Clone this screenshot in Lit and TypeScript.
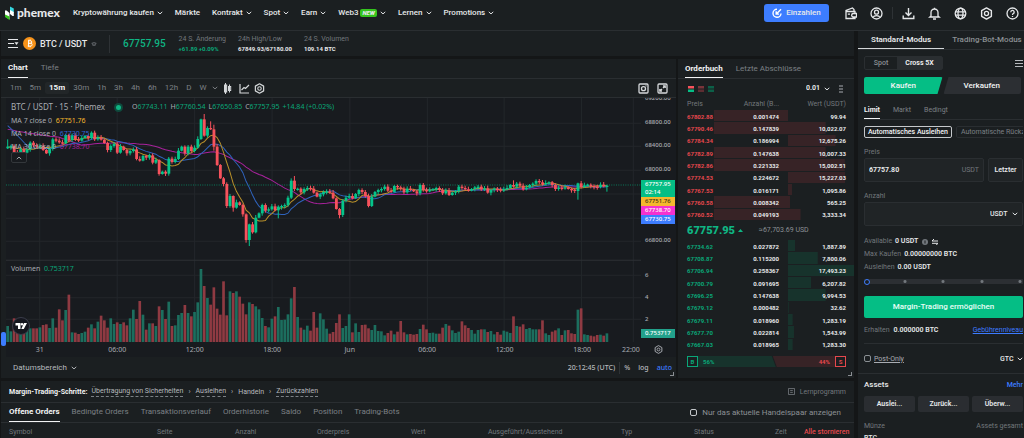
import { LitElement, html, css, svg } from "lit";
import { customElement, state } from "lit/decorators.js";
import { classMap } from "lit/directives/class-map.js";

/* Closing level and volume of each 15 minute bar; the last field is 1 for a rising bar. */
const BARS: number[][] = [
  [170, 48, 1], [168, 32, 1], [186, 71, 0], [188, 50, 0], [178, 55, 1], [188, 50, 0], [178, 45, 1], [158, 41, 1], [166, 41, 0], [170, 41, 0],
  [168, 44, 1], [180, 51, 0], [190, 53, 0], [176, 42, 1], [148, 71, 1], [152, 43, 0], [157, 98, 0], [160, 65, 0], [135, 96, 1], [150, 142, 0],
  [136, 29, 1], [148, 28, 0], [152, 24, 0], [144, 27, 1], [138, 31, 1], [144, 43, 0], [128, 53, 1], [148, 41, 0], [143, 61, 1], [149, 79, 0],
  [159, 65, 0], [180, 43, 0], [168, 71, 1], [162, 54, 1], [188, 59, 0], [170, 54, 1], [180, 59, 0], [190, 50, 0], [183, 71, 1], [178, 97, 1],
  [207, 69, 0], [212, 123, 0], [198, 82, 1], [203, 37, 0], [196, 56, 1], [218, 56, 0], [210, 48, 1], [252, 107, 0], [245, 96, 1], [251, 69, 0],
  [206, 121, 1], [216, 48, 0], [207, 50, 1], [182, 81, 1], [170, 87, 1], [190, 111, 0], [170, 87, 1], [183, 77, 0], [173, 90, 1], [147, 119, 1],
  [88, 219, 1], [137, 168, 0], [114, 132, 1], [118, 112, 0], [170, 164, 0], [225, 100, 0], [265, 82, 0], [282, 182, 0], [348, 80, 0], [318, 152, 1],
  [353, 147, 0], [337, 152, 1], [345, 136, 0], [373, 115, 0], [450, 83, 0], [403, 119, 1], [427, 114, 0], [383, 107, 1], [370, 98, 1], [345, 72, 1],
  [362, 48, 0], [358, 44, 1], [349, 70, 1], [361, 77, 0], [350, 105, 1], [348, 66, 1], [345, 67, 1], [323, 83, 1], [272, 131, 1], [297, 165, 0],
  [296, 75, 1], [307, 43, 0], [297, 37, 1], [294, 49, 1], [296, 34, 0], [308, 90, 0], [320, 43, 0], [313, 86, 1], [306, 68, 1], [304, 40, 1],
  [308, 25, 0], [325, 30, 0], [357, 57, 0], [375, 83, 0], [332, 42, 1], [323, 48, 1], [318, 83, 1], [325, 29, 0], [312, 56, 1], [300, 30, 1],
  [306, 51, 0], [318, 52, 0], [348, 41, 0], [320, 36, 1], [306, 51, 1], [300, 33, 1], [297, 32, 1], [290, 20, 1], [302, 27, 0], [306, 34, 0],
  [288, 23, 1], [292, 31, 0], [296, 63, 0], [307, 29, 0], [296, 23, 1], [300, 24, 0], [304, 22, 0], [310, 24, 0], [285, 39, 1], [300, 52, 0],
  [303, 38, 0], [300, 27, 1], [297, 28, 1], [294, 25, 1], [300, 25, 0], [310, 43, 0], [302, 54, 1], [315, 49, 0], [308, 35, 1], [304, 27, 1],
  [290, 31, 1], [294, 62, 0], [298, 50, 0], [302, 42, 0], [297, 36, 1], [292, 25, 1], [290, 36, 1], [298, 38, 0], [295, 38, 1], [308, 30, 0],
  [300, 33, 1], [296, 23, 1], [298, 30, 0], [302, 22, 0], [297, 34, 1], [294, 31, 1], [285, 27, 1], [290, 77, 0], [281, 48, 1], [287, 46, 0],
  [298, 53, 0], [293, 39, 1], [285, 42, 1], [281, 38, 1], [273, 38, 1], [277, 38, 0], [283, 65, 0], [279, 26, 1], [277, 21, 1], [285, 31, 0],
  [297, 35, 0], [293, 41, 1], [296, 21, 0], [292, 35, 1], [297, 36, 0], [299, 26, 0], [303, 24, 0], [280, 97, 1], [291, 101, 0], [286, 23, 1],
  [284, 21, 1], [288, 19, 0], [290, 17, 0], [291, 21, 0], [284, 22, 1], [289, 19, 0], [287, 26, 1],
];
/* Levels before the first visible bar, for the moving averages. */
const HISTORY = [...Array(16).fill(128), ...Array(7).fill(42), ...Array(6).fill(172)];
const LONG_WICKS: Record<number, [number, number]> = {
  0: [22, 2], 26: [4, 4], 47: [2, 5], 61: [16, 3], 63: [20, 2], 64: [14, 12], 60: [2, 3], 70: [2, 12], 74: [3, 8],
  75: [2, 18], 84: [4, 24], 89: [14, 6], 103: [3, 10], 177: [2, 26], 150: [2, 8], 157: [14, 3], 186: [3, 14],
};
const STEP = 9.65;
const X0 = 5;

const chevron = html`<svg class="chev" viewBox="0 0 8 5"><path d="M1 1l3 2.7L7 1" fill="none" stroke="currentColor" stroke-width="1.3"/></svg>`;
const gear = html`<svg class="ic" viewBox="0 0 12 12"><path d="M6 .8l4.500 2.600v5.200L6 11.200 1.500 8.600V3.400z" fill="none" stroke="currentColor" stroke-width="1.3" stroke-linejoin="round"/><circle cx="6" cy="6" r="1.900" fill="none" stroke="currentColor" stroke-width="1.2"/></svg>`;

@customElement("price-chart")
class PriceChart extends LitElement {
  static styles = css`
    :host { display: block; min-width: 0; min-height: 0; }
    svg { display: block; width: 100%; height: 100%; }
    .grid { stroke: #23272b; stroke-width: 3; }
    .pane { stroke: #2c3034; stroke-width: 3; }
    .last { stroke: #0b7a5b; stroke-width: 3; stroke-dasharray: 3 4; }
    .up { fill: #05c48a; } .down { fill: #f6525c; }
    .vup { fill: #1c6e5e; } .vdown { fill: #8f3a42; }
    .ma { fill: none; stroke-width: 3; }
    .m7 { stroke: #b8902a; } .m14 { stroke: #2f63bd; } .m30 { stroke: #a8229c; }
  `;

  private average(span: number) {
    const all = [...HISTORY, ...BARS.map((b) => b[0])];
    return BARS.map((_, i) => {
      const end = i + HISTORY.length + 1;
      const mean = all.slice(end - span, end).reduce((a, b) => a + b, 0) / span;
      return `${i * STEP + X0},${mean - 24}`;
    }).join(" ");
  }

  render() {
    return html`<svg viewBox="0 0 1902 732" preserveAspectRatio="none" role="img" aria-label="BTC / USDT">
      ${[76, 145, 217, 288, 361, 430, 532, 599, 664].map((y) => svg`<line class="grid" x1="0" x2="1902" y1=${y} y2=${y} />`)}
      ${[101, 333, 565, 797, 1030, 1262, 1492, 1724, 1879].map((x) => svg`<line class="grid" y1="0" y2="732" x1=${x} x2=${x} />`)}
      <line class="pane" x1="0" x2="1902" y1="487" y2="487" />
      ${BARS.map(([, v, up], i) => svg`<rect class=${up ? "vup" : "vdown"} x=${X0 + i * STEP - 4} width="8" y=${732 - v} height=${v} />`)}
      <line class="last" x1="0" x2="1902" y1="261" y2="261" />
      <polyline class="ma m30" points=${this.average(30)} />
      <polyline class="ma m14" points=${this.average(14)} />
      <polyline class="ma m7" points=${this.average(7)} />
      ${BARS.map(([c, , up], i) => {
        const o = i ? BARS[i - 1][0] : 175;
        const top = Math.min(o, c) - 24;
        const h = Math.max(4, Math.abs(o - c));
        const [a, b] = LONG_WICKS[i] ?? [3 + ((i * 7) % 6), 2 + ((i * 5) % 6)];
        const x = X0 + i * STEP;
        return svg`<g class=${up ? "up" : "down"}><rect x=${x - 1.5} width="3" y=${top - a} height=${h + a + b} /><rect x=${x - 4} width="8.5" y=${top} height=${h} /></g>`;
      })}
    </svg>`;
  }
}

const ASKS: [string, string, string, number, number][] = [
  ["67802.88", "0.001474", "99.94", 1, 0], ["67790.46", "0.147839", "10,022.07", 1, 57], ["67784.34", "0.186994", "12,675.26", 0, 72],
  ["67782.89", "0.147638", "10,007.33", 1, 57], ["67782.86", "0.221332", "15,002.51", 1, 86], ["67774.53", "0.224672", "15,227.03", 0, 87],
  ["67767.53", "0.016171", "1,095.86", 0, 6], ["67760.58", "0.008342", "565.25", 1, 3], ["67760.52", "0.049193", "3,333.34", 1, 19],
];
const BIDS: [string, string, string, number, number][] = [
  ["67734.62", "0.027872", "1,887.89", 0, 11], ["67708.87", "0.115200", "7,800.06", 0, 45], ["67706.94", "0.258367", "17,493.23", 0, 100],
  ["67700.79", "0.091695", "6,207.82", 0, 35], ["67696.25", "0.147638", "9,994.53", 0, 57], ["67679.12", "0.000482", "32.62", 0, 1],
  ["67679.11", "0.018960", "1,283.19", 0, 7], ["67677.70", "0.022814", "1,543.99", 0, 9], ["67667.03", "0.018965", "1,283.30", 0, 7],
];

@customElement("app-root")
class AppRoot extends LitElement {
  @state() private interval = "15m";

  static styles = css`
    :host {
      display: flex; flex-direction: column; height: 100vh; overflow: hidden;
      background: #141617; color: #e6e8ea;
      font: 500 8px/12px Roboto, "Liberation Sans", sans-serif;
    }
    * { box-sizing: border-box; }
    button, input, select { font: inherit; color: inherit; background: none; border: 0; padding: 0; margin: 0; border-radius: 0; outline: 0; }
    a { color: inherit; text-decoration: none; }
    svg { display: block; flex: none; }
    button, label, a { white-space: nowrap; }
    select { appearance: none; }
    .chev { width: 6px; height: 4px; }
    .ic { width: 11px; height: 11px; }
    .row { display: flex; align-items: center; }
    .panel { background: #1b1f21; }
    .muted { color: #72777c; }
    .green { color: #0aa678; } .red { color: #e5484d; } .blue { color: #3d7bff; }
    .push { margin-left: auto; }

    .top { height: 31px; flex: none; border-bottom: 1px solid #2a2e31; padding: 0 5px 4px 5px; }
    .brand { gap: 2px; width: 68px; font: 900 12px/14px Lato, sans-serif; }
    .brand svg { width: 10px; height: 14px; }
    .nav { gap: 12px; }
    .nav a { display: flex; align-items: center; gap: 3px; }
    .new { background: #35c41e; border-radius: 2px; font: italic 900 6px/8px Roboto, sans-serif; padding: 0 2px; margin-left: -1px; }
    .deposit { background: #3d7dff; border-radius: 3px; height: 18px; width: 65px; justify-content: center; gap: 4px; margin-right: 15px; }
    .deposit .ic { width: 10px; height: 10px; }
    .tools .ic { width: 13px; height: 13px; }
    .tools { gap: 13px; }
    .sep { width: 1px; height: 12px; background: #2e3235; margin: 0 -4px; }

    .body { flex: 1; min-height: 0; display: grid; grid-template-columns: minmax(0, 1fr) 166px; gap: 4px; }
    .main { display: grid; min-height: 0; grid-template-columns: minmax(0, 1fr) 176px; grid-template-rows: 25px 319px minmax(0, 1fr); gap: 3px 2px; padding-left: 1px; }
    .wide { grid-column: 1 / -1; }

    .ticker { padding-left: 7px; }
    .pair { gap: 4px; font-size: 9px; width: 102px; border-right: 1px solid #2e3235; height: 18px; }
    .coin { width: 13px; height: 13px; }
    .price { font-size: 10px; color: #0fb583; margin: 0 13px; }
    .stat { font-size: 7px; line-height: 10px; margin-right: 12px; font-weight: 400; }
    .stat p { margin: 0; }
    .stat .val { font-size: 6px; font-weight: 700; }

    .tabs { display: flex; gap: 13px; height: 20px; border-bottom: 1px solid #2a2e31; padding: 0 7px; }
    .tabs button { color: #7b8085; border-bottom: 1px solid transparent; font-weight: 400; }
    .tabs .on { color: #f2f3f4; border-color: #f2f3f4; font-weight: 700; }

    .chart { display: flex; flex-direction: column; min-width: 0; overflow: hidden; }
    .frames { height: 19px; flex: none; border-bottom: 1px solid #2a2e31; padding: 0 4px 0 5px; color: #7b8085; }
    .frames button { padding: 0 4px; line-height: 12px; border-radius: 2px; font-weight: 400; }
    .frames .on { background: #222628; color: #f2f3f4; font-weight: 700; }
    .frames .tool { padding: 0 3px; }
    .frames .more { padding: 0 1px; }
    .frames .ic { color: #d5d8da; }
    .canvas { flex: 1; min-height: 0; display: grid; grid-template-columns: 5px minmax(0, 1fr) 35px; grid-template-rows: minmax(0, 1fr) 15px; position: relative; font-family: "Noto Sans", sans-serif; font-size: 7px; font-weight: 400; color: #a9acb2; }
    .canvas > :not(.rail) { background-color: #181b1f; }
    .rail { grid-row: span 2; display: flex; align-items: flex-end; padding-bottom: 11px; }
    .handle { width: 5px; height: 14px; border-radius: 2px; background: #3d7dff; }
    .prices { position: relative; overflow: hidden; font-size: 6px; font-weight: 500; }
    .scale { display: grid; grid-template-rows: repeat(7, 1fr); height: 166px; margin-top: -12px; align-items: center; padding-left: 4px; }
    .vols { display: grid; grid-template-rows: repeat(3, 22px); margin-top: 12px; align-items: center; padding-left: 4px; }
    .tags { position: absolute; top: 82px; left: 0; width: 34px; color: #fff; line-height: 9px; }
    .tags div { padding-left: 4px; }
    .t1 { background: #05be85; height: 17px; line-height: 8px; } .t2 { background: #f5b82e; color: #3b2d08; } .t3 { background: #f531cf; } .t4 { background: #3d7dff; }
    .vtag { position: absolute; bottom: 4px; left: 0; width: 34px; background: #22a18b; color: #fff; line-height: 9px; padding-left: 4px; }
    .times { display: flex; align-items: center; overflow: hidden; }
    .times span { flex: 77 0 0; text-align: center; }
    .times span:first-child { margin-left: -5px; }
    .times .end { flex: 20 0 0; }
    .corner { display: grid; place-items: center; }
    .corner .ic { width: 9px; height: 9px; }
    .canvas > .legend { position: absolute; left: 10px; top: 2px; background: none; line-height: 13px; }
    .legend .sym { font-size: 8px; line-height: 14px; gap: 11px; }
    .dot { width: 5px; height: 5px; border-radius: 50%; background: #0fb583; box-shadow: 0 0 0 2px #0f4a3d; }
    .ohlc { font-size: 7px; gap: 3px; }
    .y7 { color: #f5b82e; } .y14 { color: #2f63d8; } .y30 { color: #a8229c; }
    .fold { display: grid; place-items: center; width: 16px; height: 11px; border: 1px solid #33373b; border-radius: 2px; background: #181b1f; margin-top: -1px; }
    .fold svg { transform: rotate(180deg); }
    .canvas > .volname { position: absolute; left: 10px; top: 165px; background: none; }
    .canvas > .tv { position: absolute; left: 11px; bottom: 22px; width: 18px; height: 18px; background: none; }
    .range { height: 21px; flex: none; padding: 0 4px 0 12px; color: #b6b9bd; position: relative; font-weight: 400; }
    .range button { display: flex; align-items: center; gap: 4px; }
    .range .r { font-family: "Noto Sans", sans-serif; font-size: 7px; font-weight: 500; gap: 8px; }
    .grip { position: absolute; right: 2px; bottom: 2px; width: 4px; height: 4px; border: solid #8a8e92; border-width: 0 1px 1px 0; }

    .book { position: relative; font-size: 6px; font-weight: 700; line-height: 9px; }
    .book .tabs { font-size: 8px; }
    .booktools { height: 19px; padding: 0 10px; gap: 4px; }
    .booktools svg { width: 6px; height: 6px; }
    .booktools .dots { height: 8px; margin-left: 4px; }
    .booktools label { display: flex; align-items: center; gap: 3px; font-size: 7px; }
    table { border-collapse: collapse; table-layout: fixed; width: 100%; }
    th { font-weight: 400; font-size: 7px; text-align: right; color: #72777c; padding: 0; height: 12px; }
    .bt td, .bt th { padding: 0 9px 0 0; text-align: right; }
    .bt .p { padding: 0 0 0 9px; text-align: left; width: 36px; white-space: nowrap; }
    .bt .v { width: 66px; padding-right: 8px; }
    .bt th.v { background: none; }
    .rows { height: 111px; }
    .fill, .v { background-repeat: no-repeat; background-size: var(--w, 100%) calc(100% - 1px); }
    .asks .fill, .asks .v { background-image: linear-gradient(#372326, #372326); }
    .bids .v { background-image: linear-gradient(#17332c, #17332c); }
    .mid { height: 19px; padding-left: 9px; }
    .mid b { font-size: 11px; color: #0fb583; }
    .mid svg { width: 5px; height: 3px; margin: 0 16px 0 3px; }
    .mid span { font-size: 7px; font-weight: 400; color: #8b9094; }
    .ratio { display: flex; margin: 5px 8px 0 9px; height: 11px; line-height: 11px; }
    .ratio .box { width: 11px; border: 1px solid; text-align: center; line-height: 9px; }
    .ratio .b { flex: 56 0 0; background: #17332c; padding-left: 5px; clip-path: polygon(0 0, calc(100% - 4px) 0, 100% 100%, 0 100%); }
    .ratio .s { flex: 44 0 0; background: #372326; padding-right: 5px; text-align: right; margin-left: -3px; clip-path: polygon(0 0, 100% 0, 100% 100%, 4px 100%); }

    .orders { overflow: hidden; }
    .steps { height: 22px; border-bottom: 1px solid #2a2e31; padding: 0 8px; font-size: 7px; font-weight: 400; gap: 5px; color: #b6b9bd; }
    .steps b { color: #f2f3f4; margin-right: -1px; }
    .steps a { border-bottom: 1px dashed #7b8085; line-height: 9px; }
    .steps .ic { width: 7px; height: 7px; }
    .orders .tabs { padding: 0 8px; gap: 12px; }
    .orders label { display: flex; align-items: center; gap: 5px; color: #8b9094; margin-right: 5px; font-weight: 400; }
    input[type="checkbox"] { appearance: none; width: 7px; height: 7px; border: 1px solid #c5c8cb; border-radius: 2px; flex: none; }
    .ot { margin-left: 8px; width: calc(100% - 8px); }
    .ot th { text-align: left; height: 18px; white-space: nowrap; }
    .ot button { color: #e5484d; font-weight: 500; }

    .side { overflow: hidden; }
    .modes { display: flex; height: 19px; border-bottom: 1px solid #2a2e31; }
    .modes button { width: 86px; flex: none; color: #8b9094; border-bottom: 1px solid transparent; }
    .modes .on { color: #e6e8ea; border-color: #d5d8da; font-weight: 600; }
    .form { padding: 6px 1px 0 6px; }
    .kind { display: flex; border-radius: 2px; border: 1px solid #2a2e31; width: 79px; height: 14px; font-size: 7px; }
    .kind button { flex: 1; color: #8b9094; }
    .kind .on { flex: 0 0 45px; background: #2a2e31; color: #f2f3f4; font-weight: 600; }
    .menu { width: 8px; height: 7px; border: solid #b6b9bd; border-width: 1px 0; display: grid; align-items: center; }
    .menu::after { content: ""; height: 1px; background: #b6b9bd; }
    .sides { display: flex; margin: 7px 2px 0 0; height: 17px; }
    .sides button { flex: 1; color: #f2f3f4; }
    .buy { background: #05be85; border-radius: 2px; clip-path: polygon(0 0, 100% 0, calc(100% - 5px) 100%, 0 100%); }
    .sell { background: #2c2f33; border-radius: 2px; clip-path: polygon(6px 0, 100% 0, 100% 100%, 1px 100%); }
    .types { font-size: 7px; height: 18px; padding: 0; margin: 8px 0 0; }
    .chips { display: flex; gap: 4px; margin-top: 6px; overflow: hidden; font-size: 7px; }
    .chips button { height: 12px; line-height: 10px; border: 1px solid #2a2e31; border-radius: 2px; color: #7b8085; flex: none; padding: 0 4px; font-weight: 400; }
    .chips .on { border-color: #c5c8cb; color: #f2f3f4; padding: 0 3px; font-weight: 500; }
    .lab { display: block; font-size: 7px; line-height: 10px; color: #72777c; margin: 9px 0 1px; font-weight: 400; }
    .pr { gap: 4px; }
    .field { display: flex; align-items: center; gap: 4px; height: 24px; background: #202426; border: 1px solid #2a2e31; border-radius: 2px; padding: 0 4px; font-size: 7px; flex: 1; min-width: 0; }
    .field input { flex: 1; min-width: 0; font-weight: 700; }
    .field .muted { font-weight: 400; }
    .last { width: 35px; flex: none; height: 24px; background: #202426; border: 1px solid #2a2e31; border-radius: 2px; font-size: 7px; font-weight: 600; }
    .info { font-size: 7px; line-height: 13px; margin-top: 9px; font-weight: 400; }
    .info div { display: flex; align-items: center; gap: 3px; }
    .info b { font-weight: 600; color: #e6e8ea; }
    .info svg { width: 6px; height: 6px; margin-left: 1px; }
    .slide { appearance: none; display: block; width: 100%; height: 7px; margin: 4px 0 0; background:
      radial-gradient(circle at 41px 50%, #72777c 1px, transparent 2px), radial-gradient(circle at 79px 50%, #72777c 1px, transparent 2px),
      radial-gradient(circle at 118px 50%, #72777c 1px, transparent 2px), radial-gradient(circle at 156px 50%, #72777c 1px, transparent 2px),
      linear-gradient(#2c2f33, #2c2f33) center / 100% 5px no-repeat; }
    .slide::-webkit-slider-thumb { appearance: none; width: 6px; height: 6px; border-radius: 50%; border: 1px solid #3d7dff; background: #1b1f21; }
    .cta { display: block; width: 100%; height: 22px; background: #05be85; color: #e8fff7; border-radius: 2px; font-weight: 500; margin-top: 11px; }
    .get { display: flex; font-size: 7px; gap: 4px; margin-top: 6px; padding-bottom: 7px; border-bottom: 1px solid #2a2e31; font-weight: 400; }
    .get b { font-weight: 600; }
    .get a { margin-left: auto; text-decoration: underline; }
    .opt { display: flex; align-items: center; font-size: 7px; height: 29px; }
    .opt label { display: flex; align-items: center; gap: 3px; font-weight: 400; }
    .opt input { border-color: #8b9094; }
    .opt select { margin-right: 3px; }
    .under { text-decoration: underline; text-underline-offset: 1px; color: #a9acb2; }
    .assets { border-top: 1px solid #2a2e31; padding: 5px 1px 0 6px; }
    .acts { display: flex; gap: 3px; margin: 5px 0 8px; }
    .acts button { flex: 1; height: 16px; background: #2a2d31; border-radius: 2px; font-size: 7px; font-weight: 600; }
    .assets .row { font-size: 7px; }
    .assets b { font-size: 8px; font-weight: 500; }
    .assets .muted { font-weight: 400; }
  `;

  private book(rows: typeof ASKS, side: string) {
    return html`<table class="bt rows ${side}">
      <tbody>
        ${rows.map(
          ([p, a, v, full, w]) => html`<tr>
            <td class="p ${side === "asks" ? "red" : "green"}">${p}</td>
            <td class=${classMap({ fill: !!full })}>${a}</td>
            <td class="v" style="--w:${w}%">${v}</td>
          </tr>`
        )}
      </tbody>
    </table>`;
  }

  render() {
    const nav = ["Kryptowährung kaufen", "Märkte", "Kontrakt", "Spot", "Earn", "Web3", "Lernen", "Promotions"];
    const frames = ["1m", "5m", "15m", "30m", "1h", "3h", "4h", "6h", "12h", "D", "W"];
    return html`
      <header class="top row panel">
        <a class="brand row" href="#">
          <svg viewBox="0 0 10 14"><path d="M0 4.500h1.500L4.500 7v6.500L0 10.500z" fill="#fff"/><path d="M0 8.500l4.500 2v3.500L0 11z" fill="#35c41e"/><path d="M5 .5l3.800 2V7L5 5z" fill="#35d6e0"/><path d="M5 4l3.800 2v4H7.500L5 8z" fill="#fff"/></svg>phemex
        </a>
        <nav class="nav row">
          ${nav.map((n) => html`<a href="#">${n}${n === "Web3" ? html`<span class="new">NEW</span>` : ""}${n === "Märkte" ? "" : chevron}</a>`)}
        </nav>
        <button class="deposit row push">
          <svg class="ic" viewBox="0 0 12 12"><path d="M10.800 6.500A4.800 4.800 0 1 1 6 1.500M10.800 1.500L5.500 7M5 3.800V7.300H8.500" fill="none" stroke="#fff" stroke-width="1.700"/></svg>Einzahlen
        </button>
        <div class="tools row">
          <svg class="ic" viewBox="0 0 13 13" fill="none" stroke="currentColor" stroke-width="1.300"><path d="M10 4V2.500L8.500 1 2 3.500V11.500H11V10M1.500 4.500H11V6.500M12.500 6.500H9a1.800 1.800 0 0 0 0 3.500h3.500zM3.800 7.200H6"/></svg>
          <svg class="ic" viewBox="0 0 13 13" fill="none" stroke="currentColor" stroke-width="1.300"><circle cx="6.500" cy="6.500" r="5.500"/><circle cx="6.500" cy="5.200" r="2"/><path d="M2.800 10.500c1.500-2.600 6-2.600 7.400 0"/></svg>
          <span class="sep"></span>
          <svg class="ic" viewBox="0 0 13 13" fill="none" stroke="currentColor" stroke-width="1.400"><path d="M6.500 1v7M3.500 5.500l3 3 3-3M1.200 8.500v3h10.600v-3"/></svg>
          <svg class="ic" viewBox="0 0 13 13" fill="none" stroke="currentColor" stroke-width="1.300"><path d="M6.500.8v1.200M3 9V5.500a3.500 3.500 0 0 1 7 0V9l1.200 1H1.800zM5 12h3"/></svg>
          <svg class="ic" viewBox="0 0 13 13" fill="none" stroke="currentColor" stroke-width="1.300"><circle cx="6.500" cy="6.500" r="5.300"/><ellipse cx="6.500" cy="6.500" rx="2.500" ry="5.300"/><path d="M1.200 4.800h10.600M1.200 8.200h10.600"/></svg>
          ${gear}
          <svg class="ic" viewBox="0 0 13 13" fill="none" stroke="currentColor" stroke-width="1.300"><circle cx="6.500" cy="6.500" r="5.500"/><path d="M4.800 5.200a1.700 1.700 0 1 1 2.400 1.500q-.7.300-.7 1.200M6.500 8.900v1.100"/></svg>
        </div>
      </header>

      <div class="body">
        <div class="main">
          <section class="ticker row panel wide">
            <div class="pair row">
              <svg class="ic" viewBox="0 0 11 11" stroke="currentColor" fill="none" stroke-width="1.100"><path d="M0 1.500h10M0 5.500h6M0 9.500h10"/><path d="M6.500 4.300h4L8.500 7z" fill="currentColor" stroke="none"/></svg>
              <svg class="coin" viewBox="0 0 13 13"><circle cx="6.500" cy="6.500" r="6.500" fill="#f7931a"/><path d="M5 3.800h2.500a1.200 1.200 0 0 1 0 2.500H5m0 0h2.800a1.300 1.300 0 0 1 0 2.700H4.700M5.500 3.500v6M6 2.600v1.200M7.300 2.600v1.200M6 9v1.200M7.300 9v1.200" fill="none" stroke="#fff" stroke-width=".9"/></svg>
              BTC / USDT
              <svg class="chev muted" viewBox="0 0 8 6" fill="none" stroke="currentColor"><path d="M.5 2L4 .6 7.500 2 4 3.500zM2 3v2q2 1 4 0V3"/></svg>
            </div>
            <div class="price">67757.95</div>
            <div class="stat"><p class="muted">24 S. Änderung</p><p class="val green">+61.89 +0.09%</p></div>
            <div class="stat"><p class="muted">24h High/Low</p><p class="val">67849.93/67180.00</p></div>
            <div class="stat"><p class="muted">24 S. Volumen</p><p class="val">109.14 BTC</p></div>
          </section>

          <section class="chart panel">
            <div class="tabs"><button class="on">Chart</button><button>Tiefe</button></div>
            <div class="frames row">
              ${frames.map((f) => html`<button class=${classMap({ on: f === this.interval })} @click=${() => (this.interval = f)}>${f}</button>`)}
              <button class="more" aria-label="Mehr">${chevron}</button>
              <button class="tool" aria-label="Kerzen"><svg class="ic" viewBox="0 0 11 11" fill="none" stroke="currentColor"><path d="M3.500 0v11M7.500 1.500v8" /><rect x="2.500" y="2" width="2.200" height="7" fill="currentColor"/><rect x="6.500" y="3.500" width="2.200" height="4"/></svg></button>
              <button class="tool" aria-label="Indikatoren"><svg class="ic" viewBox="0 0 11 11" fill="none" stroke="currentColor" stroke-width="1.200"><path d="M1 1v9h9M2.500 7l2.500-2.500 1.500 1L10 2"/></svg></button>
              <button class="more" aria-label="Einstellungen">${gear}</button>
              <button class="push" aria-label="Bild"><svg class="ic" viewBox="0 0 11 11" fill="none" stroke="currentColor" stroke-width="1.300"><rect x="1" y="1" width="9" height="9" rx="1"/><circle cx="5.500" cy="5.700" r="2"/><path d="M7.500 2.800h1"/></svg></button>
              <button aria-label="Vollbild"><svg class="ic" viewBox="0 0 11 11" fill="none" stroke="currentColor" stroke-width="1.300"><rect x="1" y="1" width="9" height="9" rx="1"/><path d="M6 5l2-2M6 2.800h2.200V5M5 6L3 8M2.800 6v2.200H5"/></svg></button>
            </div>
            <div class="canvas">
              <div class="rail"><span class="handle"></span></div>
              <price-chart></price-chart>
              <div class="prices">
                <div class="scale">${["69200.00", "68800.00", "68400.00", "68000.00", "", "", "66800.00"].map((p) => html`<span>${p}</span>`)}</div>
                <div class="vols"><span>6</span><span>4</span><span>2</span></div>
                <div class="tags"><div class="t1">67757.95<br />02:14</div><div class="t2">67751.76</div><div class="t3">67738.70</div><div class="t4">67730.75</div></div>
                <div class="vtag">0.753717</div>
              </div>
              <div class="times">${["31", "06:00", "12:00", "18:00", "Jun", "06:00", "12:00", "18:00"].map((t) => html`<span>${t}</span>`)}<span class="end">22:00</span></div>
              <div class="corner">${gear}</div>
              <div class="legend">
                <div class="sym row"><span>BTC / USDT · 15 · Phemex</span><i class="dot"></i>
                  <span class="ohlc row"><span>O<span class="green">67743.11</span></span><span>H<span class="green">67760.54</span></span><span>L<span class="green">67650.85</span></span><span>C<span class="green">67757.95</span></span><span class="green">+14.84 (+0.02%)</span></span>
                </div>
                <div>MA 7 close 0 &nbsp;<span class="y7">67751.76</span></div>
                <div>MA 14 close 0 &nbsp;<span class="y14">67730.75</span></div>
                <div>MA 30 close 0 &nbsp;<span class="y30">67738.70</span></div>
                <button class="fold" aria-label="Einklappen">${chevron}</button>
              </div>
              <div class="volname">Volumen &nbsp;<span class="green">0.753717</span></div>
              <svg class="tv" viewBox="0 0 18 18"><circle cx="9" cy="9" r="8.500" fill="#15171f" stroke="#3a3d4a"/><path d="M3.500 6h5v6H6V8.500H3.500zM11.800 12h-2.500l2.700-6H15z" fill="#fff"/><circle cx="10" cy="7.200" r="1.200" fill="#fff"/></svg>
            </div>
            <div class="range row">
              <button>Datumsbereich ${chevron}</button>
              <div class="r row push"><span>20:12:45 (UTC)</span><span class="sep"></span><button>%</button><button>log</button><button class="blue">auto</button></div>
              <i class="grip"></i>
            </div>
          </section>

          <section class="book panel">
            <div class="tabs"><button class="on">Orderbuch</button><button>Letzte Abschlüsse</button></div>
            <div class="booktools row">
              ${[["#f6525c", "#05be85"], ["#7a343a", "#5e2d32"], ["#0c6048", "#0c6048"]].map(
                ([a, b]) => html`<svg viewBox="0 0 6 6"><path fill=${a} d="M0 0h6v2.500H0z"/><path fill=${b} d="M0 3.500h6V6H0z"/></svg>`
              )}
              <label class="push"><select aria-label="Schrittweite"><option>0.01</option></select>${chevron}</label>
              <svg class="dots" viewBox="0 0 6 8" stroke="#a9acb2"><path d="M1 1h4M1 4h4M1 7h4"/></svg>
            </div>
            <table class="bt"><thead><tr><th class="p">Preis</th><th>Anzahl (B...</th><th class="v">Wert (USDT)</th></tr></thead></table>
            ${this.book(ASKS, "asks")}
            <div class="mid row"><b>67757.95</b><svg viewBox="0 0 5 3"><path d="M0 3L2.500 0 5 3z" fill="#0fb583"/></svg><span>≈67,703.69 USD</span></div>
            ${this.book(BIDS, "bids")}
            <div class="ratio"><span class="box green">B</span><span class="b green">56%</span><span class="s red">44%</span><span class="box red">S</span></div>
            <i class="grip"></i>
          </section>

          <section class="orders panel wide">
            <div class="steps row">
              <b>Margin-Trading-Schritte:</b><a href="#">Übertragung von Sicherheiten</a><span>›</span><a href="#">Ausleihen</a><span>›</span><span>Handeln</span><span>›</span><a href="#">Zurückzahlen</a>
              <svg class="ic push muted" viewBox="0 0 8 8" fill="none" stroke="currentColor"><path d="M.5.500h7v7h-7zM2.500 2.800h3M2.500 5h3"/></svg><span class="muted">Lernprogramm</span>
            </div>
            <div class="tabs">
              <button class="on">Offene Orders</button>${["Bedingte Orders", "Transaktionsverlauf", "Orderhistorie", "Saldo", "Position", "Trading-Bots"].map((t) => html`<button>${t}</button>`)}
              <label class="push"><input type="checkbox" />Nur das aktuelle Handelspaar anzeigen</label>
            </div>
            <table class="ot">
              <colgroup>${[148, 78, 82, 94, 77, 133, 73, 81, 29, 50].map((w) => html`<col style="width:${w / 8.45}%" />`)}</colgroup>
              <thead><tr>${["Symbol", "Seite", "Anzahl", "Orderpreis", "Wert", "Ausgeführt/Ausstehend", "Typ", "Status", "Zeit"].map((h) => html`<th>${h}</th>`)}<th><button>Alle stornieren</button></th></tr></thead>
            </table>
          </section>
        </div>

        <aside class="side panel">
          <div class="modes"><button class="on">Standard-Modus</button><button>Trading-Bot-Modus</button></div>
          <div class="form">
            <div class="row"><div class="kind"><button>Spot</button><button class="on">Cross 5X</button></div><button class="menu push" aria-label="Menü"></button></div>
            <div class="sides"><button class="buy">Kaufen</button><button class="sell">Verkaufen</button></div>
            <div class="tabs types"><button class="on">Limit</button><button>Markt</button><button>Bedingt</button></div>
            <div class="chips"><button class="on">Automatisches Ausleihen</button><button>Automatische Rückzahlung</button></div>
            <label class="lab" for="p">Preis</label>
            <div class="pr row"><div class="field"><input id="p" value="67757.80" /><span class="muted">USDT</span></div><button class="last">Letzter</button></div>
            <label class="lab" for="q">Anzahl</label>
            <div class="field"><input id="q" /><select aria-label="Einheit"><option>USDT</option></select>${chevron}</div>
            <div class="info">
              <div><span class="muted">Available</span><b>0 USDT</b><svg viewBox="0 0 6 6"><circle cx="3" cy="3" r="3" fill="#72777c"/><path d="M3 1.500v3" stroke="#1b1f21"/></svg><svg viewBox="0 0 6 6" stroke="currentColor" fill="none"><path d="M0 2h6M2 0L0 2M0 4.300h6M4 6.300l2-2"/></svg></div>
              <div><span class="muted">Max Kaufen</span><b>0.00000000 BTC</b></div>
              <div><span class="muted">Ausleihen</span><b>0.00 USDT</b></div>
            </div>
            <input class="slide" type="range" value="0" aria-label="Anteil" />
            <button class="cta">Margin-Trading ermöglichen</button>
            <div class="get"><span class="muted">Erhalten</span><b>0.000000 BTC</b><a class="blue" href="#">Gebührenniveau</a></div>
            <div class="opt"><label><input type="checkbox" /><span class="under">Post-Only</span></label><select class="push" aria-label="Gültigkeit"><option>GTC</option></select>${chevron}</div>
          </div>
          <div class="assets">
            <div class="row"><b>Assets</b><a class="blue push" href="#">Mehr</a></div>
            <div class="acts"><button>Auslei...</button><button>Zurück...</button><button>Überw...</button></div>
            <div class="row muted"><span>Münze</span><span class="push">Assets gesamt</span></div>
            <div class="row">BTC</div>
          </div>
        </aside>
      </div>
    `;
  }
}
